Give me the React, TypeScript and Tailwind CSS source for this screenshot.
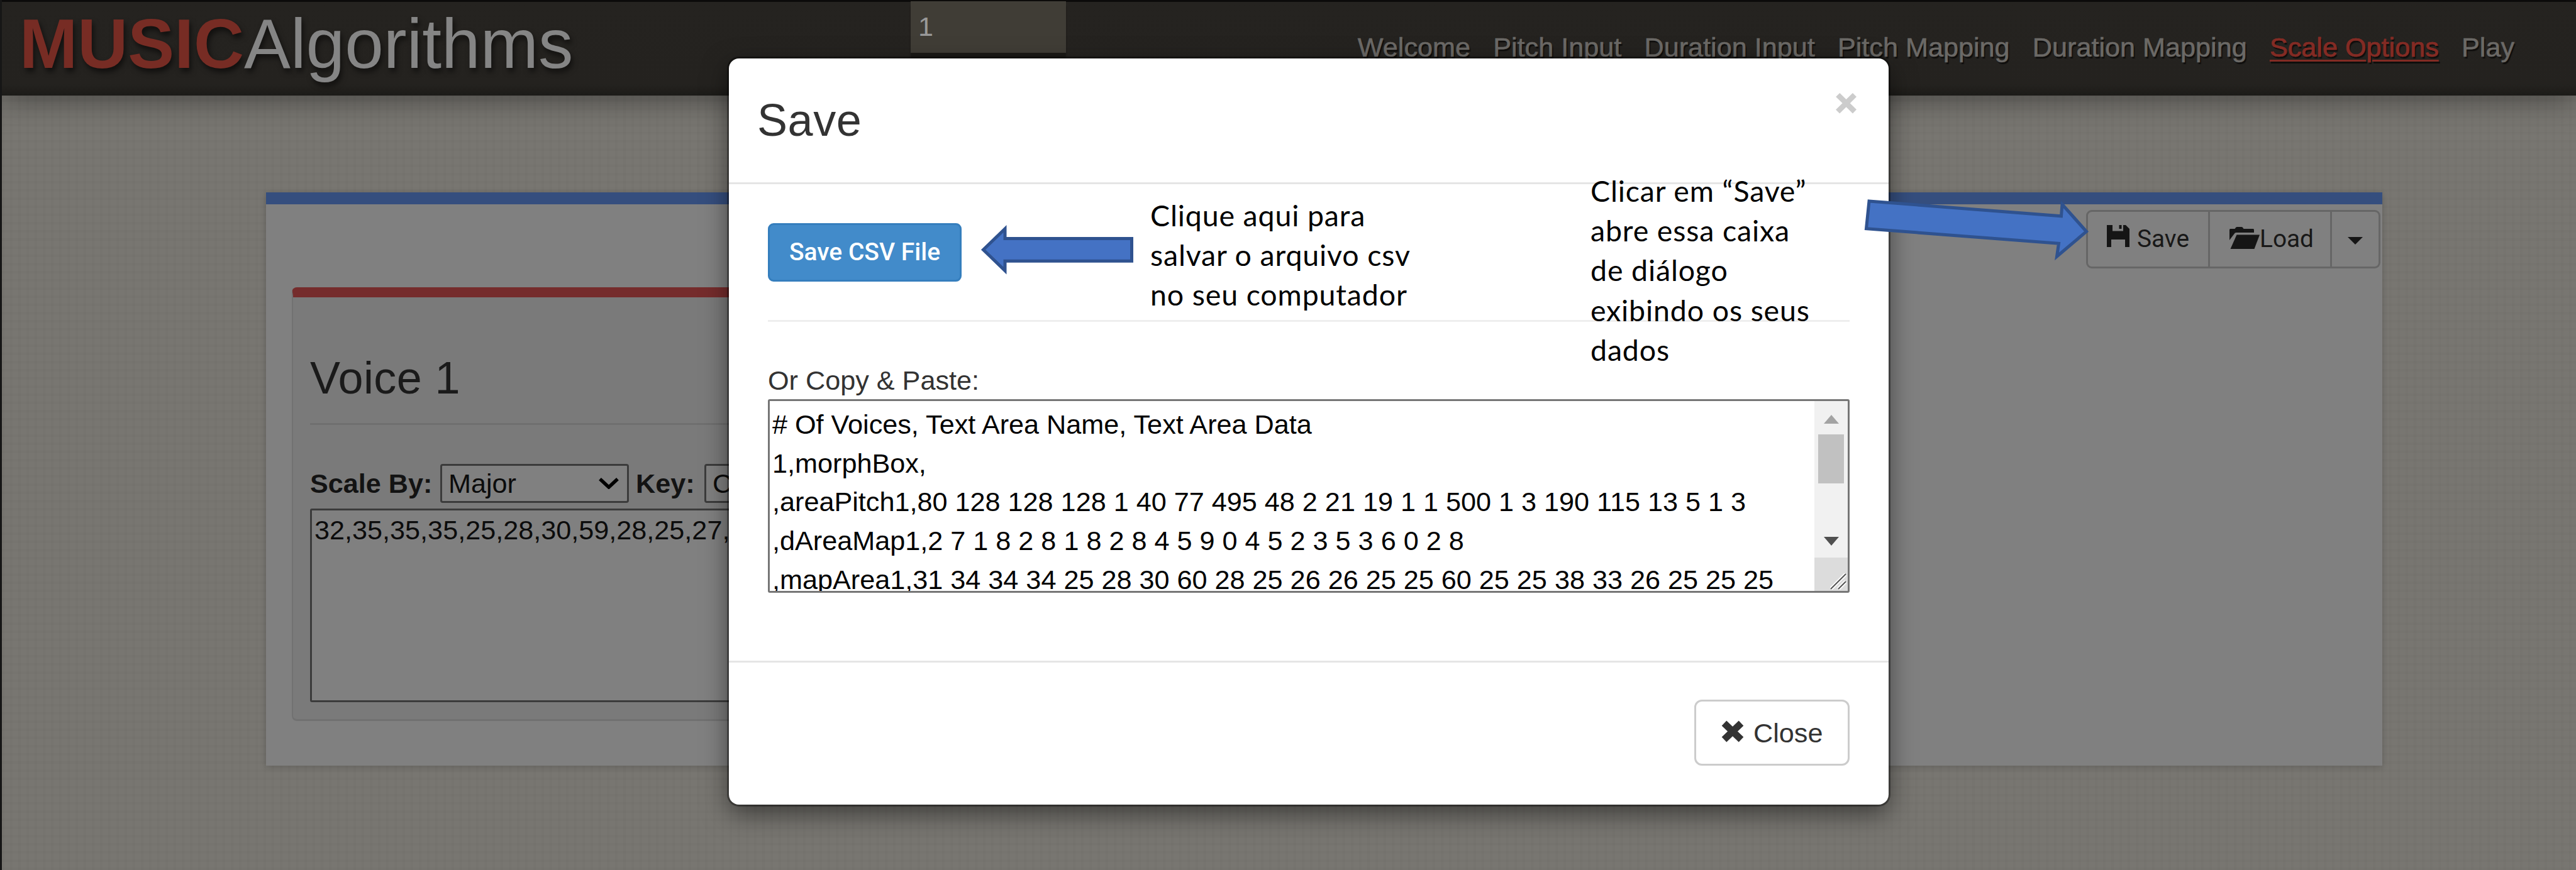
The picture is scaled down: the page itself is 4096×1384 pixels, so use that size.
import React from "react";

const navItems = [
  "Welcome",
  "Pitch Input",
  "Duration Input",
  "Pitch Mapping",
  "Duration Mapping",
  "Scale Options",
  "Play",
];

const csvLines = [
  "# Of Voices, Text Area Name, Text Area Data",
  "1,morphBox,",
  ",areaPitch1,80 128 128 128 1 40 77 495 48 2 21 19 1 1 500 1 3 190 115 13 5 1 3",
  ",dAreaMap1,2 7 1 8 2 8 1 8 2 8 4 5 9 0 4 5 2 3 5 3 6 0 2 8",
  ",mapArea1,31 34 34 34 25 28 30 60 28 25 26 26 25 25 60 25 25 38 33 26 25 25 25",
];

function TopBar() {
  return (
    <header className="relative z-10 flex h-[152px] justify-between border-t-[3px] border-[#0c0b0a] bg-[linear-gradient(180deg,#252320_0%,#24221f_88%,#1c1b18_100%)] pl-[28px] pr-[98px] shadow-[0_4px_46px_rgba(0,0,0,0.45)]">
      <div className="mt-[6px] flex text-[110.8px] leading-[122px] [text-shadow:3px_6px_8px_rgba(0,0,0,0.55)]">
        <span className="font-bold text-[#772c24]">MUSIC</span>
        <span className="text-[#858585]">Algorithms</span>
      </div>
      <nav className="mt-[41px] flex h-[62px] gap-[36.2px] whitespace-nowrap text-[43.2px] leading-[62px] text-[#6b6966] [-webkit-text-stroke:0.6px_currentColor] [text-shadow:2px_3px_1px_rgba(0,0,0,0.6)]">
        {navItems.map((item) => (
          <a
            key={item}
            className={
              item === "Scale Options"
                ? "text-[#832b24] underline decoration-[3px] underline-offset-[5px]"
                : ""
            }
          >
            {item}
          </a>
        ))}
      </nav>
      <div className="absolute left-[1445px] top-[-1px] h-[82px] w-[247px] bg-[#403d36] pl-[12px] text-[43.2px] leading-[82px] text-[#999999] shadow-[0_8px_2px_#1b1916]">
        <span className="block -mt-[1px]">1</span>
      </div>
    </header>
  );
}

function FloppyIcon() {
  return (
    <svg viewBox="0 0 36 35" className="h-[35px] w-[36px]" fill="#151515">
      <path d="M0 0H9V9.5H26V0H30L36 6V35H29V23H7V35H0Z" />
      <rect x="19.5" y="0" width="4" height="6" />
    </svg>
  );
}

function FolderIcon() {
  return (
    <svg viewBox="0 0 48 35" className="h-[35px] w-[48px]" fill="#151515">
      <path d="M0 21V4.5Q0 3 1.500 3H8.500L10 1Q10.700 0 12 0H19Q20.500 0 21.200 1L22.500 3H37.500Q39 3 39 4.500V9H10.500Q8.500 9 7.600 11Z" />
      <path d="M11.500 12.500H48L39.500 35H1.500Z" />
    </svg>
  );
}

function ButtonGroup() {
  return (
    <div className="flex h-[93px] w-[468px] rounded-[9px] border-[3px] border-[#666666] font-['Roboto',sans-serif] text-[38.800px] leading-[87px] text-[#181818]">
      <div className="flex w-[194px] items-start border-r-[3px] border-[#666666] pl-[30px]">
        <span className="mt-[21px]">
          <FloppyIcon />
        </span>
        <span className="ml-[12px] -mt-[1px]">Save</span>
      </div>
      <div className="flex w-[194px] items-start border-r-[3px] border-[#666666] pl-[31px]">
        <span className="mt-[24px]">
          <FolderIcon />
        </span>
        <span className="-mt-[1px]">Load</span>
      </div>
      <div className="flex flex-1 justify-center pt-[40px]">
        <svg viewBox="0 0 24 12" className="h-[12px] w-[24px]" fill="#151515">
          <path d="M0 0H24L12 12Z" />
        </svg>
      </div>
    </div>
  );
}

function Select({ label, className }: { label: string; className: string }) {
  return (
    <div
      className={`flex h-[62px] items-center justify-between rounded-[4px] border-[3px] border-[#3b3b3b] bg-[#808080] pl-[10px] pr-[13px] text-[#0c0c0c] ${className}`}
    >
      <span>{label}</span>
      <svg viewBox="0 0 32 18" className="h-[18px] w-[32px]" fill="none" stroke="#000" strokeWidth="5.500">
        <path d="M2 2L16 15L30 2" />
      </svg>
    </div>
  );
}

function VoicePanel() {
  return (
    <section className="ml-[41px] mt-[30px] h-[690px] w-[2200px] rounded-[8px] border-x-[2px] border-b-[3px] border-t-[16px] border-[#717171] border-t-[#752c2c] bg-[#7a7a7a] px-[27px] pt-[88px] text-[43.2px]">
      <h2 className="text-[72px] leading-[80px] tracking-[0.400px] text-[#1a1a1a]">Voice 1</h2>
      <div className="mt-[32px] h-[3px] bg-[#6f6f6f]" />
      <div className="mt-[62px] flex h-[62px] items-center whitespace-nowrap leading-[62px]">
        <span className="w-[207px] font-bold text-[#131313]">Scale By:</span>
        <Select label="Major" className="w-[300px]" />
        <span className="ml-[11px] w-[109px] font-bold text-[#131313]">Key:</span>
        <Select label="C" className="w-[180px]" />
      </div>
      <div className="mt-[9px] h-[308px] w-[1719px] rounded-[3px] border-[3px] border-[#3b3b3b] bg-[#808080] pl-[4px] leading-[62px] text-[#0c0c0c]">
        32,35,35,35,25,28,30,59,28,25,27,
      </div>
    </section>
  );
}

function ScrollBar() {
  return (
    <div className="flex w-[53px] flex-col items-center bg-[#f1f1f1]">
      <svg viewBox="0 0 24 14" className="mt-[22px] h-[14px] w-[24px]" fill="#a3a3a3">
        <path d="M12 0L24 14H0Z" />
      </svg>
      <div className="mt-[17px] h-[78px] w-[41px] bg-[#c1c1c1]" />
      <svg viewBox="0 0 24 14" className="mt-[85px] h-[14px] w-[24px]" fill="#505050">
        <path d="M0 0H24L12 14Z" />
      </svg>
      <div className="mt-auto flex h-[53px] w-full items-end justify-end bg-[#dcdcdc]">
        <svg viewBox="0 0 28 28" className="mb-[2px] mr-[2px] h-[26px] w-[26px]" fill="none">
          <path d="M1 27L27 1M14 27L27 14" stroke="#ffffff" strokeWidth="6" />
          <path d="M1 27L27 1M14 27L27 14" stroke="#555555" strokeWidth="2.200" />
        </svg>
      </div>
    </div>
  );
}

function SaveDialog() {
  return (
    <div className="absolute left-[1156px] top-[93px] z-20 flex h-[1187px] w-[1844px] flex-col rounded-[16px] bg-white text-[43.2px] text-[#333333] shadow-[0_0_0_3px_rgba(0,0,0,0.35),0_14px_41px_rgba(0,0,0,0.5)]">
      <div className="flex h-[200px] items-start justify-between border-b-[3px] border-[#e5e5e5] pl-[45px] pr-[50px] pt-[58px]">
        <h1 className="text-[72px] leading-[80px] tracking-[0.600px]">Save</h1>
        <span className="-mt-[17px] text-[60px] font-bold leading-[60px] text-[#cccccc] [-webkit-text-stroke:2px_#cccccc]">×</span>
      </div>
      <div className="flex flex-col px-[62px] pt-[62px]">
        <button className="h-[93px] w-[308px] rounded-[9px] border-[3px] border-[#357ebd] bg-[#428bca] font-['Roboto',sans-serif] text-[39px] font-medium leading-[85px] text-white">
          Save CSV File
        </button>
        <div className="mt-[61px] h-[3px] bg-[#eeeeee]" />
        <label className="mt-[62px] h-[61px] leading-[62px]">Or Copy &amp; Paste:</label>
        <div className="flex h-[308px] justify-between overflow-hidden rounded-[3px] border-[3px] border-[#767676]">
          <div className="whitespace-pre pl-[4px] pt-[7px] leading-[61.700px] text-black">
            {csvLines.map((line) => (
              <div key={line}>{line}</div>
            ))}
          </div>
          <ScrollBar />
        </div>
      </div>
      <div className="mt-[108px] flex justify-end border-t-[3px] border-[#e5e5e5] pr-[62px] pt-[59px]">
        <button className="flex h-[105px] w-[247px] items-start rounded-[12px] border-[3px] border-[#cccccc] pl-[40px] leading-[98px]">
          <svg viewBox="0 0 36 35" className="mt-[30px] h-[35px] w-[36px]" fill="none" stroke="#333333" strokeWidth="11">
            <path d="M4.500 4.500L31.500 30.500M31.500 4.500L4.500 30.500" />
          </svg>
          <span className="ml-[15px] mt-[1px]">Close</span>
        </button>
      </div>
    </div>
  );
}

function Annotations() {
  return (
    <div className="absolute -left-[3px] top-0 z-30 h-[1384px] w-[4096px] font-['Lato',sans-serif] text-[46.500px] leading-[63.200px] tracking-[0.850px] text-black">
      <p className="absolute left-[1829px] top-[311px] whitespace-nowrap">
        Clique aqui para
        <br />
        salvar o arquivo csv
        <br />
        no seu computador
      </p>
      <p className="absolute left-[2529px] top-[272px] whitespace-nowrap">
        Clicar em “Save”
        <br />
        abre essa caixa
        <br />
        de diálogo
        <br />
        exibindo os seus
        <br />
        dados
      </p>
      <svg
        viewBox="0 0 4096 1384"
        className="absolute inset-0 h-full w-full"
        fill="#4472c4"
        stroke="#2f528f"
        strokeWidth="5"
      >
        <path d="M1563.500 397.300L1598 364V379.500H1799.500V415.200H1598V430.500Z" />
        <path d="M2972 320L3277.500 343.700L3279 325L3317.500 368.300L3270.500 408L3273.500 387.200L2967.500 363.800Z" />
      </svg>
    </div>
  );
}

export default function App() {
  return (
    <div className="relative h-[1384px] w-[4096px] overflow-hidden border-l-[3px] border-[#161616] bg-[#787671] bg-[repeating-linear-gradient(0deg,rgba(0,0,0,0.02)_0px,rgba(0,0,0,0.02)_4px,transparent_4px,transparent_13px),repeating-linear-gradient(90deg,rgba(0,0,0,0.02)_0px,rgba(0,0,0,0.02)_4px,transparent_4px,transparent_13px)] font-['Liberation_Sans',Arial,sans-serif]">
      <TopBar />
      <main className="ml-[420px] mt-[154px] h-[912px] w-[3365px] border-t-[19px] border-[#354e7e] bg-[#808080] shadow-[0_2px_10px_rgba(0,0,0,0.18)]">
        <div className="flex justify-end pr-[3px] pt-[9px]">
          <ButtonGroup />
        </div>
        <VoicePanel />
      </main>
      <SaveDialog />
      <Annotations />
    </div>
  );
}
